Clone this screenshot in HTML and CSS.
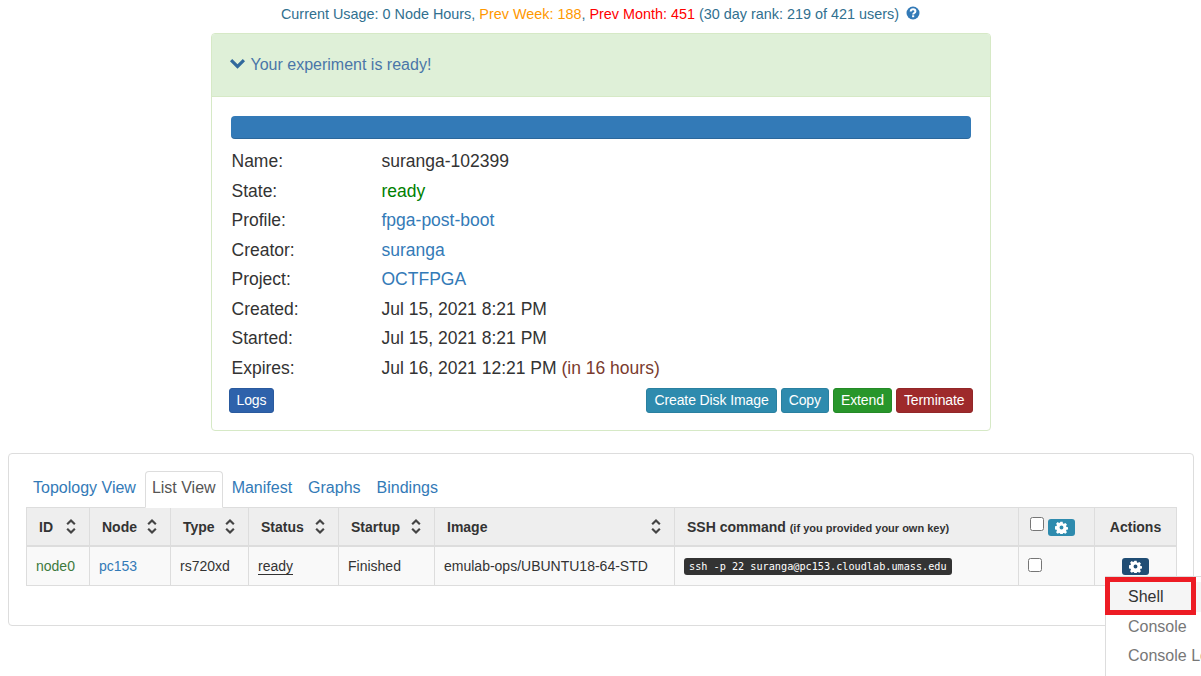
FILE: index.html
```html
<!DOCTYPE html>
<html lang="en">
<head>
    <meta charset="UTF-8">
    <title>Experiment status</title>
    <link rel="stylesheet" href="styles.css">
</head>
<body>
    <svg class="defs" width="0" height="0">
        <symbol id="gear" viewBox="0 0 16 16">
            <path fill-rule="evenodd" d="M6.6 1h2.8l.4 2 1.2.5 1.7-1.1 2 2-1.1 1.7.5 1.2 2 .4v2.8l-2 .4-.5 1.2 1.1 1.7-2 2-1.7-1.1-1.2.5-.4 2H6.6l-.4-2-1.2-.5-1.7 1.1-2-2 1.1-1.7-.5-1.2-2-.4V6.6l2-.4.5-1.2-1.1-1.7 2-2 1.7 1.1 1.2-.5zM8 5.6a2.4 2.4 0 1 0 0 4.8 2.4 2.4 0 0 0 0-4.8z"/>
        </symbol>
        <symbol id="sort" viewBox="0 0 12 18">
            <path d="M6 0l5.5 5.5-1.8 1.8L6 3.6 2.3 7.3.5 5.5zM6 18L.5 12.500l1.800-1.800L6 14.400l3.700-3.700 1.800 1.800z"/>
        </symbol>
    </svg>

    <p class="usage">
        Current Usage: 0 Node Hours,
        <span class="usage-week">Prev Week: 188</span>,
        <span class="usage-month">Prev Month: 451</span>
        (30 day rank: 219 of 421 users)
        <svg class="help" viewBox="0 0 14 14"><circle cx="7" cy="7" r="6.500"/><path d="M4.700 5.500C4.800 4 5.800 3.300 7.100 3.300c1.400 0 2.300.8 2.300 1.900 0 1.800-2.200 1.700-2.200 3.200" /><rect x="6.100" y="9.300" width="2.100" height="1.900"/></svg>
    </p>

    <div class="status-panel">
        <div class="status-heading">
            <svg class="chevron" viewBox="0 0 15 10"><path d="M2.200 0L7.500 5.300 12.800 0 15 2.200 7.500 9.700 0 2.200z"/></svg>
            <span>Your experiment is ready!</span>
        </div>
        <div class="status-body">
            <div class="progress-bar"></div>
            <dl class="info">
                <div class="info-row"><dt>Name:</dt><dd>suranga-102399</dd></div>
                <div class="info-row"><dt>State:</dt><dd class="state-ready">ready</dd></div>
                <div class="info-row"><dt>Profile:</dt><dd><a href="#">fpga-post-boot</a></dd></div>
                <div class="info-row"><dt>Creator:</dt><dd><a href="#">suranga</a></dd></div>
                <div class="info-row"><dt>Project:</dt><dd><a href="#">OCTFPGA</a></dd></div>
                <div class="info-row"><dt>Created:</dt><dd>Jul 15, 2021 8:21 PM</dd></div>
                <div class="info-row"><dt>Started:</dt><dd>Jul 15, 2021 8:21 PM</dd></div>
                <div class="info-row"><dt>Expires:</dt><dd>Jul 16, 2021 12:21 PM <span class="expires-in">(in 16 hours)</span></dd></div>
            </dl>
            <div class="actions">
                <button class="btn btn-logs">Logs</button>
                <div class="actions-right">
                    <button class="btn btn-info">Create Disk Image</button>
                    <button class="btn btn-info">Copy</button>
                    <button class="btn btn-extend">Extend</button>
                    <button class="btn btn-terminate">Terminate</button>
                </div>
            </div>
        </div>
    </div>

    <div class="nodes-panel">
        <ul class="tabs">
            <li><a href="#">Topology View</a></li>
            <li class="active"><a href="#">List View</a></li>
            <li><a href="#">Manifest</a></li>
            <li><a href="#">Graphs</a></li>
            <li><a href="#">Bindings</a></li>
        </ul>
        <table class="nodes">
            <colgroup>
                <col class="col-id"><col class="col-node"><col class="col-type"><col class="col-status">
                <col class="col-startup"><col class="col-image"><col class="col-ssh"><col class="col-check"><col class="col-actions">
            </colgroup>
            <thead>
                <tr>
                    <th><div class="th-sort">ID <svg class="sort"><use href="#sort"/></svg></div></th>
                    <th><div class="th-sort">Node <svg class="sort"><use href="#sort"/></svg></div></th>
                    <th><div class="th-sort">Type <svg class="sort"><use href="#sort"/></svg></div></th>
                    <th><div class="th-sort">Status <svg class="sort"><use href="#sort"/></svg></div></th>
                    <th><div class="th-sort">Startup <svg class="sort"><use href="#sort"/></svg></div></th>
                    <th><div class="th-sort">Image <svg class="sort"><use href="#sort"/></svg></div></th>
                    <th>SSH command <small>(if you provided your own key)</small></th>
                    <th class="th-check"><input type="checkbox"> <span class="gear-btn gear-info"><svg><use href="#gear"/></svg></span></th>
                    <th class="th-actions">Actions</th>
                </tr>
            </thead>
            <tbody>
                <tr>
                    <td><a class="node-id" href="#">node0</a></td>
                    <td><a href="#">pc153</a></td>
                    <td>rs720xd</td>
                    <td><span class="status-ready">ready</span></td>
                    <td>Finished</td>
                    <td>emulab-ops/UBUNTU18-64-STD</td>
                    <td><code>ssh -p 22 suranga@pc153.cloudlab.umass.edu</code></td>
                    <td class="td-check"><input type="checkbox"></td>
                    <td class="td-actions"><span class="gear-btn gear-dark"><svg><use href="#gear"/></svg></span></td>
                </tr>
            </tbody>
        </table>
    </div>

    <ul class="menu">
        <li class="menu-active">Shell</li>
        <li>Console</li>
        <li>Console Log</li>
    </ul>
    <div class="highlight"></div>
</body>
</html>
```

FILE: styles.css
```css
html, body {
    height: 676px;
    overflow: hidden;
}
body {
    position: relative;
    margin: 0;
    font-family: "Liberation Sans", Arial, sans-serif;
    font-size: 14px;
    color: #333;
    background-color: #fff;
}
a {
    color: #337ab7;
    text-decoration: none;
}
.defs {
    position: absolute;
}

.usage {
    margin: 0;
    height: 33px;
    padding-top: 5px;
    box-sizing: border-box;
    line-height: 18px;
    font-size: 14.4px;
    text-align: center;
    color: #31708f;
}
.usage-week {
    color: #ff9800;
}
.usage-month {
    color: #f00;
}
.help {
    width: 14px;
    height: 14px;
    margin-left: 3px;
    vertical-align: -1px;
}
.help circle, .help rect {
    fill: #337ab7;
}
.help rect {
    fill: #fff;
}
.help path {
    fill: none;
    stroke: #fff;
    stroke-width: 2;
}

.status-panel {
    width: 780px;
    height: 398px;
    box-sizing: border-box;
    margin: 0 auto 22px;
    border: 1px solid #d6e9c6;
    border-radius: 4px;
    background-color: #fff;
}
.status-heading {
    display: flex;
    align-items: center;
    gap: 6px;
    height: 62px;
    padding-left: 18px;
    border-bottom: 1px solid #d6e9c6;
    border-radius: 3px 3px 0 0;
    background-color: #dff0d8;
    color: #31708f;
    font-size: 16px;
    color: #4a76a8;
}
.chevron {
    width: 15px;
    height: 10px;
    margin-bottom: 2px;
    fill: #31699c;
}
.status-body {
    padding: 19px 19px 0;
}
.progress-bar {
    height: 23px;
    border-radius: 4px;
    background-color: #337ab7;
    box-shadow: inset 0 -1px 0 rgba(0, 0, 0, .15);
}
.info {
    margin: 7px 0 0;
    font-size: 17.5px;
}
.info-row {
    display: flex;
    height: 29.5px;
    line-height: 30px;
}
.info dt {
    width: 150px;
    padding-left: 1px;
}
.info dd {
    margin: 0;
}
.state-ready {
    color: #008000;
}
.expires-in {
    color: #7a3b2e;
}

.actions {
    display: flex;
    justify-content: space-between;
    margin: 6px -2px 0;
}
.actions-right {
    display: flex;
    gap: 4px;
}
.btn {
    height: 25px;
    padding: 0 7px 2px;
    border: 1px solid transparent;
    border-radius: 3px;
    color: #fff;
    font-family: inherit;
    font-size: 14px;
    letter-spacing: -.1px;
}
.btn-logs {
    background-color: #2e62ab;
    border-color: #2a5a9e;
}
.btn-info {
    background-color: #2e8bae;
    border-color: #2a80a0;
}
.btn-extend {
    background-color: #28962b;
    border-color: #248a27;
}
.btn-terminate {
    background-color: #9e2a2b;
    border-color: #922728;
}

.nodes-panel {
    height: 173px;
    box-sizing: border-box;
    margin: 0 7px 0 8px;
    padding: 17px 17px 0;
    border: 1px solid #ddd;
    border-radius: 4px;
}
.tabs {
    display: flex;
    height: 36px;
    margin: 0;
    padding: 0;
    list-style: none;
    font-size: 16px;
}
.tabs li a {
    display: block;
    height: 36px;
    box-sizing: border-box;
    padding: 8px 7px 0;
    line-height: 18px;
    margin-right: 2px;
}
.tabs .active a {
    position: relative;
    height: 37px;
    border: 1px solid #ddd;
    border-bottom-color: #fff;
    border-radius: 4px 4px 0 0;
    background-color: #fff;
    color: #555;
    padding: 7px 6px 0;
    z-index: 1;
}

.nodes {
    width: 1150px;
    table-layout: fixed;
    border-collapse: collapse;
    border-top: 1px solid #ddd;
    font-size: 14px;
}
.col-id { width: 63px; }
.col-node { width: 81px; }
.col-type { width: 78px; }
.col-status { width: 90px; }
.col-startup { width: 96px; }
.col-image { width: 240px; }
.col-ssh { width: 344px; }
.col-check { width: 76px; }
.col-actions { width: 82px; }
.nodes th, .nodes td {
    border: 1px solid #ddd;
    padding: 0 12px;
    white-space: nowrap;
    text-align: left;
}
.nodes th {
    height: 37px;
    border-bottom-width: 2px;
    background-color: #eee;
    font-size: 14px;
}
.nodes td {
    height: 38px;
    padding-left: 9px;
    background-color: #f9f9f9;
}
.th-sort {
    display: flex;
    align-items: center;
    justify-content: space-between;
}
.sort {
    width: 12px;
    height: 15px;
    fill: #444;
}
.nodes small {
    font-size: 11px;
}
.node-id {
    color: #3d7a3d;
}
.status-ready {
    border-bottom: 1px solid #333;
}
.nodes code {
    display: inline-block;
    padding: 1px 5px;
    border-radius: 3px;
    background-color: #333;
    color: #fff;
    font-family: "DejaVu Sans Mono", monospace;
    font-size: 10.2px;
    line-height: 15px;
}
.nodes .th-check {
    padding: 0 0 0 11px;
}
.nodes .td-check {
    padding-left: 9px;
}
.nodes input {
    width: 14px;
    height: 14px;
    margin: 0;
}
.nodes .th-actions {
    text-align: center;
    padding: 0;
}
.nodes .td-actions {
    text-align: center;
    padding: 0;
}
.gear-btn {
    display: inline-flex;
    align-items: center;
    justify-content: center;
    width: 27px;
    height: 17px;
    border-radius: 3px;
    vertical-align: -3px;
}
.gear-btn svg {
    width: 13px;
    height: 13px;
    fill: #fff;
}
.gear-info {
    background-color: #2e8bae;
}
.gear-dark {
    background-color: #204d74;
}

.menu {
    position: absolute;
    left: 1105px;
    top: 576px;
    width: 160px;
    height: 120px;
    box-sizing: border-box;
    margin: 0;
    padding: 5px 0;
    border: 1px solid #ddd;
    background-color: #fff;
    list-style: none;
    font-size: 16px;
    color: #777;
}
.menu li {
    height: 29.500px;
    line-height: 29px;
    padding-left: 22px;
}
.menu .menu-active {
    background-color: #f5f5f5;
    color: #333;
}
.highlight {
    position: absolute;
    left: 1105px;
    top: 577px;
    width: 91px;
    height: 38px;
    box-sizing: border-box;
    border: 5px solid #ed1c24;
}
```
